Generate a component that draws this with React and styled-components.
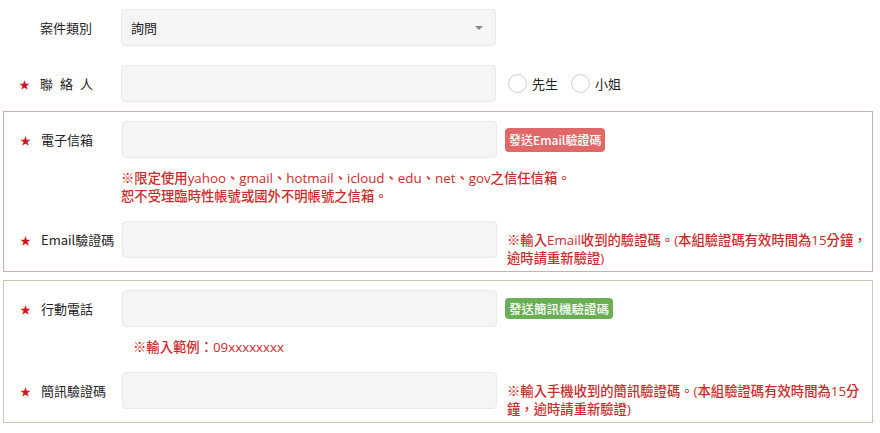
import React from 'react';
import styled, { createGlobalStyle } from 'styled-components';

const GlobalStyle = createGlobalStyle`
    body {
        margin: 0;
        background: #fff;
        font-family: "Open Sans", "Noto Sans CJK TC", sans-serif;
        color: #333;
    }
`

function App() {
    return (
        <Page lang="zh-Hant-TW">
            <GlobalStyle />
            <Row>
                <Label>案件類別</Label>
                <Select>
                    詢問
                    <Caret />
                </Select>
            </Row>
            <Row style={{ marginTop: 19 }}>
                <Label required>聯<Gap />絡<Gap />人</Label>
                <Input />
                <Side>
                    <Radio><Circle />先生</Radio>
                    <Radio><Circle />小姐</Radio>
                </Side>
            </Row>

            <Box tone="red">
                <Row>
                    <Label required>電子信箱</Label>
                    <Input />
                    <Side>
                        <SendButton color="#e06868" fontSize="12px" h="24px">發送Email驗證碼</SendButton>
                    </Side>
                </Row>
                <Note indent="117px">
                    ※限定使用yahoo、gmail、hotmail、icloud、edu、net、gov之信任信箱。<br />
                    恕不受理臨時性帳號或國外不明帳號之信箱。
                </Note>
                <Row>
                    <Label required>Email驗證碼</Label>
                    <Input />
                    <SideNote>
                        ※輸入Email收到的驗證碼。(本組驗證碼有效時間為15分鐘，<br />
                        逾時請重新驗證)
                    </SideNote>
                </Row>
            </Box>

            <Box tone="green">
                <Row>
                    <Label required>行動電話</Label>
                    <Input />
                    <Side>
                        <SendButton color="#6aae55" fontSize="12.5px" h="21px">發送簡訊機驗證碼</SendButton>
                    </Side>
                </Row>
                <Note indent="129px">※輸入範例：09xxxxxxxx</Note>
                <Row>
                    <Label required>簡訊驗證碼</Label>
                    <Input />
                    <SideNote>
                        ※輸入手機收到的簡訊驗證碼。(本組驗證碼有效時間為15分<br />
                        鐘，逾時請重新驗證)
                    </SideNote>
                </Row>
            </Box>
        </Page>
    )
}

export default App;


const Page = styled.div`
    width: 870px;
    padding: 9px 0 0 3px;
    font-size: 13px;
`

const Row = styled.div`
    display: grid;
    grid-template-columns: 118px 375px 1fr;
    align-items: center;
`

const Label = styled.div`
    position: relative;
    padding-left: 37px;
    font-family: "Noto Sans CJK TC", sans-serif;
    font-size: 13px;
    color: #222;
    white-space: nowrap;

    &::before {
        content: ${props => props.required ? '"★"' : 'none'};
        position: absolute;
        left: 16px;
        top: 50%;
        transform: translateY(-50%);
        color: #d0161b;
        font-size: 11px;
    }
`

const Gap = styled.span`
    display: inline-block;
    width: 7px;
`

const Input = styled.div`
    box-sizing: border-box;
    height: 37px;
    background: #f5f5f5;
    border: 1px solid #e9e9e9;
    border-radius: 4px;
`

const Select = styled(Input)`
    display: flex;
    align-items: center;
    justify-content: space-between;
    padding: 0 12px 0 9px;
    font-family: "Noto Sans CJK TC", sans-serif;
    color: #222;
`

const Caret = styled.span`
    width: 0;
    height: 0;
    border-left: 4px solid transparent;
    border-right: 4px solid transparent;
    border-top: 4px solid #888;
`

const Side = styled.div`
    display: flex;
    align-items: center;
    padding-left: 8px;
`

const Radio = styled.label`
    display: flex;
    align-items: center;
    gap: 5px;
    margin-left: 4px;
    margin-right: 9px;
    font-family: "Noto Sans CJK TC", sans-serif;
    color: #222;
`

const Circle = styled.span`
    box-sizing: border-box;
    width: 19px;
    height: 19px;
    border-radius: 50%;
    border: 1px solid #cfcfcf;
    background: #fff;
`

const SendButton = styled.span`
    display: inline-flex;
    align-items: center;
    height: ${props => props.h};
    padding: 0 4px;
    border-radius: 4px;
    background: ${props => props.color};
    color: #fff;
    font-family: "Noto Sans CJK TC", sans-serif;
    font-size: ${props => props.fontSize};
    font-weight: 500;
    white-space: nowrap;
`

const Box = styled.div`
    margin-top: ${props => props.tone === 'red' ? '9px' : '8px'};
    border: 1px solid ${props => props.tone === 'red' ? '#ccaeae' : '#c6c8b4'};
    padding: 9px 0 13px;
`

const Note = styled.div`
    padding: 11px 0 16px ${props => props.indent};
    color: #cc2a2a;
    font-size: 13.33px;
    font-weight: 500;
    line-height: 18px;
    white-space: nowrap;
`

const SideNote = styled.div`
    align-self: start;
    margin-bottom: -10px;
    padding: 10px 0 0 10px;
    color: #cc2a2a;
    font-size: 13.33px;
    font-weight: 500;
    line-height: 18px;
    white-space: nowrap;
`
